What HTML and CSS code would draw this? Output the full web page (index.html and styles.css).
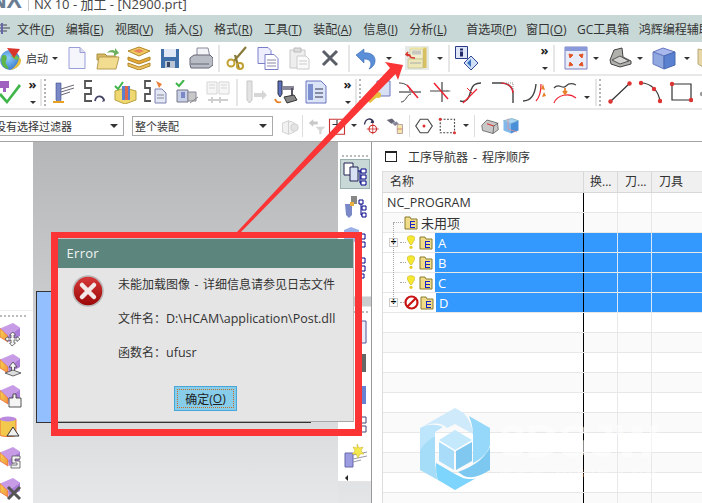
FILE: index.html
```html
<!DOCTYPE html>
<html lang="zh">
<head>
<meta charset="utf-8">
<title>NX 10 - 加工</title>
<link rel="stylesheet" href="styles.css">
</head>
<body>
<div class="app">
  <header class="titlebar">
    <span class="logo">NX</span>
    <span class="title-rule"></span>
    <span class="title-text">NX 10 - 加工 - [N2900.prt]</span>
  </header>
  <nav class="menubar">
    <svg class="menu-icon" width="12" height="12" viewBox="0 0 12 12"><path d="M0 2h7M0 5h10M0 8h7" stroke="#445" stroke-width="1.2"/><path d="M2 0v11" stroke="#66a" stroke-width="2"/></svg>
    <span class="menu-item m-first">文件(<u>F</u>)</span>
    <span class="menu-item">编辑(<u>E</u>)</span>
    <span class="menu-item">视图(<u>V</u>)</span>
    <span class="menu-item">插入(<u>S</u>)</span>
    <span class="menu-item">格式(<u>R</u>)</span>
    <span class="menu-item">工具(<u>T</u>)</span>
    <span class="menu-item">装配(<u>A</u>)</span>
    <span class="menu-item">信息(<u>I</u>)</span>
    <span class="menu-item">分析(<u>L</u>)</span>
    <span class="menu-item m-wide">首选项(<u>P</u>)</span>
    <span class="menu-item m-tight">窗口(<u>O</u>)</span>
    <span class="menu-item m-tighter">GC工具箱</span>
    <span class="menu-item m-tight">鸿辉编程辅助</span>
  </nav>

  <div class="toolbar tb1">
    <svg class="mn2" width="24" height="24" viewBox="0 0 24 24"><defs><radialGradient id="gl" cx=".4" cy=".4" r=".7"><stop offset="0" stop-color="#8fd0f8"/><stop offset="1" stop-color="#2f6fc8"/></radialGradient></defs><circle cx="12" cy="14" r="10" fill="url(#gl)"/><path d="M4 10c4-3 6 2 4 5s4 6 2 8c-5-1-8-6-6-13z" fill="#5fb545"/><path d="M13 10c3-2 7-1 8 2-1 3-5 2-8-2z" fill="#6cc050"/><path d="M9 2l13 1-6 9z" fill="#d8362c"/><path d="M23 13c1 5-4 10-11 11 4-2 8-6 9-12z" fill="#e8c040"/></svg>
    <span class="tool-label m4">启动</span><i class="caret m2"></i>
    <svg class="m7" width="24" height="24" viewBox="0 0 24 24"><path d="M4 1.500h11l5 5v16H4z" fill="#f4f6fc" stroke="#9a9ed8"/><path d="M15 1.500v5h5" fill="#dde" stroke="#9a9ed8"/></svg>
    <svg class="m7" width="24" height="24" viewBox="0 0 24 24"><path d="M1 8h8l2 2h9v4H1z" fill="#d8b860" stroke="#a89040"/><path d="M3 11h20l-3 12H1z" fill="#f2dc90" stroke="#b89c50"/><path d="M11 7c2-3 6-4 8-2V2l4 5-5 3V7c-2-1-5-1-7 0z" fill="#6cb060"/></svg>
    <svg class="m7" width="24" height="24" viewBox="0 0 24 24"><path d="M1 5l11-4 11 4-11 5z" fill="#f0c860" stroke="#b08828"/><path d="M6 5l6-2 5 2-5 2z" fill="#e88060"/><path d="M1 11l11 4 11-4v3l-11 4-11-4z" fill="#e8a838" stroke="#b08828"/><path d="M1 17l11 4 11-4v3l-11 4-11-4z" fill="#eec060" stroke="#b08828"/></svg>
    <svg class="m7" width="24" height="24" viewBox="0 0 24 24"><path d="M3 3h18v19H3z" fill="#3f6fa8"/><path d="M6 3h12v8H6z" fill="#dfe8f4"/><path d="M7 15h10v7H7z" fill="#b8c4d4"/><path d="M9 16h3v5H9z" fill="#3a4a66"/></svg>
    <svg class="m7" width="24" height="24" viewBox="0 0 24 24"><path d="M8 2h11l2 9H8z" fill="#f2f4f8" stroke="#889"/><path d="M1 12l4-3h16l3 3v7l-4 3H2l-1-3z" fill="#b8bcc4" stroke="#667"/><path d="M2 18h18" stroke="#667"/></svg>
    <span class="sep m5"></span>
    <svg class="m5" width="24" height="24" viewBox="0 0 24 24"><path d="M21 1L9 15M14 23L10 9" stroke="#8a7a3a" stroke-width="2.200" fill="none"/><circle cx="6" cy="17" r="3.500" fill="none" stroke="#c0a030" stroke-width="2"/><circle cx="15" cy="20" r="3" fill="none" stroke="#c0a030" stroke-width="2"/></svg>
    <svg class="m7" width="24" height="24" viewBox="0 0 24 24"><path d="M2 1.500h10l3 3v13H2z" fill="#eef" stroke="#7a7ec8"/><path d="M9 8.500h9l4 4v11H9z" fill="#fff" stroke="#7a7ec8"/><path d="M11 14h9M11 17h9M11 20h9" stroke="#88a"/></svg>
    <svg class="m7" width="24" height="24" viewBox="0 0 24 24"><path d="M3 4h15v18H3z" fill="#eee" stroke="#c8c8c8"/><path d="M7 2h7v4H7z" fill="#ddd" stroke="#bbb"/><path d="M10 10h9l3 3v10H10z" fill="#fafafa" stroke="#ccc"/><path d="M12 15h8M12 18h8" stroke="#ccc"/></svg>
    <svg class="m7" width="24" height="24" viewBox="0 0 24 24"><path d="M5 5l14 14M19 5L5 19" stroke="#5a5f68" stroke-width="3"/></svg>
    <span class="sep m6"></span>
    <svg class="m4" width="24" height="24" viewBox="0 0 24 24"><path d="M2 9l8-6v4c7-1 12 3 11 9-.5 3-3 6-6 7 3-4 3-10-5-10v4z" fill="#5a8ed8" stroke="#3a6cb0" stroke-width=".6"/></svg>
    <i class="caret m8"></i>
    <svg class="m13" width="24" height="24" viewBox="0 0 24 24"><path d="M0 0h24v24H0z" fill="#e6eae6"/><path d="M5 3h13v10H5z" fill="#f0eecf" stroke="#c8c48c" stroke-width=".6"/><path d="M18 1.500h3.500V22H18z" fill="#d8c060"/><path d="M5 1.500h16.500L18 3H5z" fill="#ece49c"/><path d="M7 4.500h9v4H7z" fill="#c8c8c0"/><path d="M3 13h15v9H3z" fill="#ece8b8" stroke="#b8b480" stroke-width=".6"/><path d="M5 17h11" stroke="#aaa"/><path d="M3 6L1 8.500 3.500 10M2 8.500c3 0 3 1 3 1.500 0 2 3 2 5 2" fill="none" stroke="#d8342c" stroke-width="1.600"/></svg>
    <i class="caret m8"></i>
    <span class="sep m5"></span>
    <svg class="m5" width="24" height="24" viewBox="0 0 24 24"><path d="M.5.500h12v12H.5z" fill="#dfe6f6" stroke="#2a3a8a"/><path d="M5 2.500h3v2H5zM5 5.500h3v5H5z" fill="#222a6a"/><path d="M16 10l7 7-7 7-7-7z" fill="#cfe0f4" stroke="#334a9a"/><path d="M16 13v8l-4-4z" fill="#3a70c0"/></svg>
    <span class="more m61"><b>»</b><i class="caret"></i></span>
    <span class="sep m4"></span>
    <svg class="m9" width="24" height="24" viewBox="0 0 24 24"><path d="M1 1h22v22H1z" fill="#e8ecf8" stroke="#7a80c0"/><path d="M1 1h22v4H1z" fill="#8a9ad8"/><path d="M5 8l4 1-3 3zM19 8l-4 1 3 3zM5 20l4-1-3-3zM19 20l-4-1 3-3z" fill="#e0552a" stroke="#e0552a"/></svg>
    <i class="caret m5"></i>
    <svg class="m9" width="24" height="24" viewBox="0 0 24 24"><path d="M2 14L6 4l8-2 1 9 8 4v3l-11 3-9-3z" fill="#b0b0ac" stroke="#444"/><path d="M4 14l8-4 9 5-9 3z" fill="#d4d4d0" stroke="#555"/></svg>
    <i class="caret m5"></i>
    <svg class="m9" width="24" height="24" viewBox="0 0 24 24"><path d="M1 6l10-4 12 4-11 4z" fill="#a8b8ec" stroke="#6878c0"/><path d="M1 6l11 4v13L1 18z" fill="#90a8e0" stroke="#6878c0"/><path d="M12 10l11-4v13l-11 4z" fill="#5a80d0" stroke="#4868b0"/></svg>
    <i class="caret m8"></i>
    <svg class="m7" width="24" height="24" viewBox="0 0 24 24"><path d="M1 3l10 2v19L1 18z" fill="#e8d8a8" stroke="#b8a878"/></svg>
  </div>

  <div class="toolbar tb2">
    <svg class="mn2" width="24" height="24" viewBox="0 0 24 24"><path d="M2 1h9v7H8v4H5V8H2z" fill="#a060c0"/><path d="M3 13l6 7L21 4l2 2L9 24l-8-9z" fill="#3fb54a"/></svg>
    <span class="more m6"><b>»</b><i class="caret"></i></span>
    <span class="sep m3"></span><span class="grip m2"></span>
    <svg class="m5" width="24" height="24" viewBox="0 0 24 24"><path d="M5 3h5v17l-2.500 3L5 20z" fill="#7a88c8" stroke="#3a4a88" stroke-width=".6"/><path d="M10 9l13-4M10 12l13-4M10 15l9-3" stroke="#667"/><path d="M2 22h11" stroke="#e8a020" stroke-width="2"/></svg>
    <svg class="m7" width="24" height="24" viewBox="0 0 24 24"><path d="M10 1H3v7h6v6H3v7h7" fill="none" stroke="#555" stroke-width="1.800"/><path d="M13 21c1-6 7-6 9-1" fill="none" stroke="#446" stroke-width="1.800"/><path d="M20 22l3-1-1-3z" fill="#446"/></svg>
    <svg class="m8" width="24" height="24" viewBox="0 0 24 24"><path d="M1 11l10-3 11 3v9l-11 4-10-4z" fill="#f0d870" stroke="#b8a040"/><path d="M8 6h8v14H8z" fill="#5a80d0"/><path d="M11 6h3v14h-3z" fill="#e06848"/><path d="M1 6l3 3 5-7" fill="none" stroke="#3fb54a" stroke-width="2"/></svg>
    <svg class="m6" width="24" height="24" viewBox="0 0 24 24"><path d="M7 1H1v7h5v6H1v7h6" fill="none" stroke="#555" stroke-width="1.800"/><path d="M11 9h7l4 4v10H11z" fill="#e4e8f4" stroke="#7a80b0"/><path d="M13 15h7M13 18h7" stroke="#889"/><path d="M12 1l6 3-3 4z" fill="#e8803a"/></svg>
    <svg class="m7" width="24" height="24" viewBox="0 0 24 24"><path d="M2 10h11v12H2z" fill="#c8d0e8" stroke="#778"/><path d="M6 12h4v6H6z" fill="#7a88c8"/><path d="M13 12h8v9h-8z" fill="#c8c8c8" stroke="#889"/><path d="M15 23l8-6" stroke="#888"/><path d="M1 3l3 3 5-6" fill="none" stroke="#3fb54a" stroke-width="2"/></svg>
    <svg class="m7 dim" width="24" height="24" viewBox="0 0 24 24"><path d="M1 2h10v12H1zM13 2h10v12H13z" fill="#f4f4f4" stroke="#ccc"/><path d="M3 5h6M3 8h6M15 5h6M15 8h6" stroke="#ccc"/><path d="M2 20h20M6 17v6M14 17v6" stroke="#c4c4c4" stroke-width="2"/></svg>
    <span class="sep m6"></span>
    <svg class="m6 dim" width="24" height="24" viewBox="0 0 24 24"><path d="M3 1h5v19l-2.500 3L3 20z" fill="#ddd" stroke="#bbb"/><path d="M10 13h8v-3l5 5-5 5v-3h-8z" fill="#ccc"/></svg>
    <svg class="m6" width="24" height="24" viewBox="0 0 24 24"><path d="M4 1h4v13l-2 3-2-3z" fill="#5a70c0" stroke="#334"/><path d="M8 6h12v4H8z" fill="#889"/><path d="M18 8v7" stroke="#556" stroke-width="2"/><path d="M10 17l10-2 3 5-10 3z" fill="#888" stroke="#333"/><path d="M1 19c1 3 3 4 6 3" fill="none" stroke="#e8802a" stroke-width="1.800"/></svg>
    <svg class="m6" width="24" height="24" viewBox="0 0 24 24"><path d="M2 1h15l5 5v17H2z" fill="#dbe4f6" stroke="#6a74c0"/><path d="M4 4h5v16H4z" fill="#7a90d0"/><path d="M11 9h8M11 13h8M11 17h8" stroke="#335"/></svg>
    <span class="more m15"><b>»</b><i class="caret"></i></span>
    <span class="sep m3"></span><span class="grip m2"></span>
    <svg class="m7" width="24" height="24" viewBox="0 0 24 24"><path d="M9 1h13v15H9z" fill="#d8e0f4" stroke="#6a74c0"/><path d="M1 22l8-7" stroke="#e8c040" stroke-width="3"/><circle cx="10" cy="15" r="3" fill="#e8c040"/></svg>
    <svg class="m6" width="24" height="24" viewBox="0 0 24 24"><path d="M1 12h22" stroke="#444" stroke-width="1.200"/><path d="M3 22c5 0 6-8 10-8M1 3c6 0 11 3 11 8" fill="none" stroke="#444"/><path d="M9 5l11 13" stroke="#e23" stroke-width="1.500"/></svg>
    <svg class="m7" width="24" height="24" viewBox="0 0 24 24"><path d="M1 11h19M13 2v20" stroke="#444" stroke-width="1.200"/><path d="M13 2v9M14 11h9" stroke="#888" stroke-dasharray="1.500 1.500"/><path d="M5 3l14 16" stroke="#e23" stroke-width="1.500"/></svg>
    <svg class="m6" width="24" height="24" viewBox="0 0 24 24"><path d="M1 21c7 2 9-3 11-11 1-4 4-7 10-7" fill="none" stroke="#444" stroke-width="1.400"/><path d="M4 23L18 9" stroke="#e23" stroke-width="1.200"/><path d="M8 8l6 6" stroke="#e23"/></svg>
    <svg class="m8" width="24" height="24" viewBox="0 0 24 24"><path d="M1 3h9c8 0 12 5 12 10v10" fill="none" stroke="#444" stroke-width="1.400"/><path d="M10 3c8 0 12 5 12 10" fill="none" stroke="#e23" stroke-width="1.200"/><path d="M15 3h7v6" fill="none" stroke="#888" stroke-dasharray="1 1"/></svg>
    <svg class="m7" width="24" height="24" viewBox="0 0 24 24"><path d="M1 21c8 0 12-7 13-17" fill="none" stroke="#444" stroke-width="1.400"/><path d="M14 21c4-4 5-10 5-17" fill="none" stroke="#e23" stroke-width="1.200"/><path d="M21 4l2 6-4-1zM22 12l-2 5 4-1z" fill="#e8802a"/></svg>
    <svg class="m7" width="24" height="24" viewBox="0 0 24 24"><path d="M1 8c5-6 8 2 12-2 3-3 6-3 10-1" fill="none" stroke="#444" stroke-width="1.200"/><path d="M1 23c3-8 15-11 22-5" fill="none" stroke="#e23" stroke-width="1.200"/><path d="M12 8v5M10 11l2 3 2-3" fill="none" stroke="#e8802a" stroke-width="1.800"/></svg>
    <i class="caret m7 low"></i>
    <span class="sep m5"></span><span class="grip m2"></span>
    <svg class="m7" width="24" height="24" viewBox="0 0 24 24"><path d="M2 22L22 3" stroke="#333" stroke-width="1.200"/><circle cx="2.500" cy="21.500" r="2.200" fill="#d33"/><circle cx="21.500" cy="3.500" r="2.200" fill="#d33"/></svg>
    <svg class="m6" width="24" height="24" viewBox="0 0 24 24"><path d="M3 3c10 0 18 8 19 19" fill="none" stroke="#333" stroke-width="1.200"/><circle cx="3" cy="3" r="2.200" fill="#d33"/><circle cx="16" cy="9" r="2.200" fill="#d33"/><circle cx="22" cy="21" r="2.200" fill="#d33"/></svg>
    <svg class="m7" width="24" height="24" viewBox="0 0 24 24"><path d="M3 4h19v16H3z" fill="none" stroke="#333" stroke-width="1.200"/><circle cx="3" cy="4" r="2.200" fill="#d33"/><circle cx="22" cy="20" r="2.200" fill="#d33"/></svg>
    <svg class="m6" width="24" height="24" viewBox="0 0 24 24"><circle cx="3" cy="14" r="2.200" fill="#999"/></svg>
  </div>

  <div class="toolbar tb3">
    <span class="combo combo-a">没有选择过滤器<i class="caret"></i></span>
    <span class="combo combo-b m8">整个装配<i class="caret"></i></span>
    <svg class="m8 dim" viewBox="0 0 24 24"><path d="M2 8l8-3 8 3v12l-8 3-8-3z" fill="#eee" stroke="#bbb"/><path d="M10 5v18" stroke="#bbb"/><circle cx="18" cy="14" r="5" fill="#ddd" stroke="#bbb"/></svg>
    <span class="sep m3 thin"></span>
    <svg class="m5 dim" viewBox="0 0 24 24"><path d="M1 8l6-5v3h6v4H7v3z" fill="#bbb"/><path d="M10 13h13l-5 5v5h-3v-5z" fill="#ccc"/></svg>
    <svg class="m2" viewBox="0 0 24 24"><path d="M2 3h20v20H2z" fill="#fff" stroke="#c33" stroke-width="1.500"/><path d="M12 4v12M6 10h12" stroke="#333" stroke-width="1.500"/></svg>
    <i class="caret m5"></i>
    <svg class="m6" viewBox="0 0 24 24"><path d="M2 10C3 2 11 0 14 7" fill="none" stroke="#335" stroke-width="1.800"/><path d="M12 3l3 5-5 0z" fill="#335"/><circle cx="13" cy="16" r="5" fill="none" stroke="#c22" stroke-width="1.500"/><path d="M13 8v15M5 16h16" stroke="#c22"/></svg>
    <svg class="m5" viewBox="0 0 24 24"><path d="M1 4l7-2 4 4-5 3z" fill="#667"/><path d="M8 8l6-2 3 3-5 3z" fill="#889"/><path d="M15 10h7v12h-7z" fill="#f4e8a8" stroke="#a89"/><path d="M15 16h7" stroke="#c66"/></svg>
    <span class="sep m5 thin"></span>
    <svg class="m5" viewBox="0 0 24 24"><path d="M7 3h10l6 9-6 9H7L1 12z" fill="#fff" stroke="#444" stroke-width="1.500"/><circle cx="12" cy="12" r="2" fill="#d33"/></svg>
    <svg class="m5" viewBox="0 0 24 24"><path d="M3 3h19v18H3z" fill="none" stroke="#444" stroke-width="1.500" stroke-dasharray="2.500 2"/><circle cx="3" cy="3" r="2" fill="#d33"/><circle cx="22" cy="21" r="2" fill="#d33"/></svg>
    <i class="caret m7"></i>
    <span class="sep m5 thin"></span>
    <svg class="m6" viewBox="0 0 24 24"><path d="M1 11L8 4l14 4 1 9-7 5-14-4z" fill="#c8c8c8" stroke="#555"/><path d="M8 9l9 3" stroke="#d33" stroke-width="1.500"/><path d="M16 22l1-10 6-4" fill="none" stroke="#555"/></svg>
    <svg class="m3" viewBox="0 0 24 24"><path d="M2 5l11-3 9 3-10 4z" fill="#a8d4f4" stroke="#7ab"/><path d="M2 5l10 4v13L2 18z" fill="#80b8ec"/><path d="M12 9l10-4v13l-10 4z" fill="#4a90d8"/><path d="M8 2v14l12 4" fill="none" stroke="#e88"/></svg>
  </div>

  <main class="workspace">
    <aside class="left-panel">
      <div class="left-dock">
        <span class="grip-h"></span>
        <svg width="24" height="24" viewBox="0 0 24 24"><use href="#boxshape"/><path d="M13 9l2.500 3H14v3h3v-1.500l3 2.500-3 2.500V17h-3v3h1.500L12 23l-2.500-3H11v-3H8v1.500L5 16l3-2.500V15h3v-3H9.500z" fill="#f4f4f4" stroke="#555" stroke-width=".8"/></svg>
        <svg width="24" height="24" viewBox="0 0 24 24"><use href="#boxshape"/><path d="M13 8l4 5h-2.500v5h-3v-5H9z" fill="#f4f4f4" stroke="#444" stroke-width=".8"/><path d="M5 19l8-3 8 3-8 3z" fill="#ddd" stroke="#444" stroke-width=".8"/></svg>
        <svg width="24" height="24" viewBox="0 0 24 24"><use href="#boxshape"/><path d="M9 22V13h4V9h3v4h5v9z" fill="#f4f4f4" stroke="#444" stroke-width=".9"/></svg>
        <svg width="24" height="24" viewBox="0 0 24 24"><path d="M0 3v16c0 2 16 2 16 0V3z" fill="#f2c94c" stroke="#e86030" stroke-width=".8"/><ellipse cx="8" cy="3" rx="8" ry="2.500" fill="#b98ae0"/><path d="M13 11l6 9H7z" fill="#f0f0f0" stroke="#333"/></svg>
        <svg width="24" height="24" viewBox="0 0 24 24"><use href="#boxshape"/><path d="M12 9h8v3h-5v2h5v7h-9v-3h6v-2h-5z" fill="#f4f4f4" stroke="#555" stroke-width=".8"/></svg>
        <svg width="24" height="24" viewBox="0 0 24 24"><use href="#boxshape"/><path d="M8 9l12 12M20 9L8 21" stroke="#555" stroke-width="3"/></svg>
      </div>
      <svg class="defs" width="0" height="0"><defs><linearGradient id="boxg" x1="0" y1="0" x2="1" y2="1"><stop offset="0" stop-color="#f6d850"/><stop offset="1" stop-color="#f09040"/></linearGradient><g id="boxshape"><path d="M0 5.500L13 0l7 4.500L8 13z" fill="#c79be6"/><path d="M0 5.500L8 13v6L0 14z" fill="url(#boxg)" stroke="#e8603a" stroke-width=".7"/><path d="M8 13l12-8.500V13L9 19z" fill="#ab7cd8"/></g></defs></svg>
    </aside>

    <section class="viewport"><div class="part"></div></section>

    <aside class="strip">
      <div class="strip-dock">
        <span class="grip-h"></span>
        <span class="strip-btn active"><svg width="24" height="24" viewBox="0 0 24 24"><path d="M1 1h9v12H1z" fill="#fff" stroke="#225"/><path d="M7 5h8v14H7z" fill="#d8e0f4" stroke="#225"/><path d="M18 7h5v4h-5zM18 13h5v4h-5zM18 19h5v4h-5z" fill="#fff" stroke="#008"/><path d="M15 9h3M17 9v12h1" fill="none" stroke="#008"/></svg></span>
        <svg width="24" height="24" viewBox="0 0 24 24"><path d="M8 1h6v8H8z" fill="#888"/><path d="M2 9h7v11l-3 3-3-3z" fill="#7a88c8"/><path d="M7 7h4v4H7z" fill="#e8b040"/><path d="M16 5h4v4h-4zM19 11h4v4h-4zM19 18h4v4h-4z" fill="#fff" stroke="#008"/><path d="M18 9v11h1" fill="none" stroke="#008"/></svg>
        <svg width="24" height="24" viewBox="0 0 24 24"><path d="M1 5l7-3 8 3v10l-7 3-8-3z" fill="#9cb0e8"/><path d="M17 9h5v5h-5zM17 17h5v5h-5z" fill="#fff" stroke="#008"/></svg>
        <svg width="24" height="24" viewBox="0 0 24 24"><path d="M17 3h5v5h-5zM17 11h5v5h-5zM17 19h4v4h-4z" fill="#fff" stroke="#008"/></svg>
      </div>
      <div class="strip-dock lower">
        <span class="grip-h"></span>
        <svg width="24" height="24" viewBox="0 0 24 24"><path d="M16 1h7v22h-7z" fill="#e8ecf8" stroke="#559"/></svg>
        <svg width="24" height="24" viewBox="0 0 24 24"><path d="M16 3h7v18h-7z" fill="#666"/></svg>
        <svg width="24" height="24" viewBox="0 0 24 24"><path d="M14 4h9v18h-9z" fill="#6880d0"/></svg>
        <svg width="24" height="24" viewBox="0 0 24 24"><path d="M16 4h7v6h-7zM16 13h7v6h-7z" fill="#fff" stroke="#447"/></svg>
        <svg width="24" height="24" viewBox="0 0 24 24"><path d="M2 9h8v14H2z" fill="#9c9ce0" stroke="#66a"/><path d="M10 11l14-3M10 15l14-3M10 18l8-2" stroke="#99a"/><path d="M14 0l2 4 4-1-2 4 3 3-4 0-2 4-2-4-4 0 3-3-2-4 4 1z" fill="#f4e850" stroke="#c8b020" stroke-width=".5"/></svg>
        <i class="left-arrow"></i>
      </div>
    </aside>

    <section class="nav-panel">
      <h2 class="nav-title"><span class="win-icon"></span>工序导航器 - 程序顺序</h2>
      <div class="grid">
        <div class="grid-head">
          <span class="cell c-name">名称</span>
          <span class="cell c-a">换...</span>
          <span class="cell c-b">刀...</span>
          <span class="cell c-c">刀具</span>
        </div>
        <div class="row"><span class="cell c-name">NC_PROGRAM</span><span class="cell c-a"></span><span class="cell c-b"></span><span class="cell c-c"></span></div>
        <div class="row alt"><span class="cell c-name"><span class="tree-dash d-long"></span><svg class="folder" width="14" height="14" viewBox="0 0 14 14"><path d="M1 1h5l1 2h6v10H1z" fill="#f0dc88" stroke="#8a7a30"/><path d="M6 5h5v1H7v2h4v1H7v2h4v1H6z" fill="#1a22c8"/></svg><span class="label big">未用项</span></span><span class="cell c-a"></span><span class="cell c-b"></span><span class="cell c-c"></span></div>
        <div class="row sel"><span class="cell c-name"><i class="plus">+</i><span class="tree-dash"></span><svg class="bulb" width="8" height="15" viewBox="0 0 10 17"><path d="M5 0c3 0 5 1.500 5 3 0 2-3 6-4 8H4C3 9 0 5 0 3c0-1.500 2-3 5-3z" fill="#f4e830" stroke="#b8a010" stroke-width=".6"/><circle cx="5" cy="14.500" r="2" fill="#e8cc20"/></svg><svg class="folder" width="14" height="14" viewBox="0 0 14 14"><path d="M1 1h5l1 2h6v10H1z" fill="#f0dc88" stroke="#8a7a30"/><path d="M6 5h5v1H7v2h4v1H7v2h4v1H6z" fill="#1a22c8"/></svg><span class="label">A</span></span><span class="cell c-a"></span><span class="cell c-b"></span><span class="cell c-c"></span></div>
        <div class="row sel"><span class="cell c-name"><span class="plus-gap"></span><span class="tree-dash"></span><svg class="bulb" width="8" height="15" viewBox="0 0 10 17"><path d="M5 0c3 0 5 1.500 5 3 0 2-3 6-4 8H4C3 9 0 5 0 3c0-1.500 2-3 5-3z" fill="#f4e830" stroke="#b8a010" stroke-width=".6"/><circle cx="5" cy="14.500" r="2" fill="#e8cc20"/></svg><svg class="folder" width="14" height="14" viewBox="0 0 14 14"><path d="M1 1h5l1 2h6v10H1z" fill="#f0dc88" stroke="#8a7a30"/><path d="M6 5h5v1H7v2h4v1H7v2h4v1H6z" fill="#1a22c8"/></svg><span class="label">B</span></span><span class="cell c-a"></span><span class="cell c-b"></span><span class="cell c-c"></span></div>
        <div class="row sel"><span class="cell c-name"><span class="plus-gap"></span><span class="tree-dash"></span><svg class="bulb" width="8" height="15" viewBox="0 0 10 17"><path d="M5 0c3 0 5 1.500 5 3 0 2-3 6-4 8H4C3 9 0 5 0 3c0-1.500 2-3 5-3z" fill="#f4e830" stroke="#b8a010" stroke-width=".6"/><circle cx="5" cy="14.500" r="2" fill="#e8cc20"/></svg><svg class="folder" width="14" height="14" viewBox="0 0 14 14"><path d="M1 1h5l1 2h6v10H1z" fill="#f0dc88" stroke="#8a7a30"/><path d="M6 5h5v1H7v2h4v1H7v2h4v1H6z" fill="#1a22c8"/></svg><span class="label">C</span></span><span class="cell c-a"></span><span class="cell c-b"></span><span class="cell c-c"></span></div>
        <div class="row sel"><span class="cell c-name"><i class="plus">+</i><span class="tree-dash short"></span><svg class="stop" width="15" height="15" viewBox="0 0 15 15"><circle cx="7.500" cy="7.500" r="6" fill="#fff" stroke="#c81414" stroke-width="2.200"/><path d="M3.500 11.500l8-8" stroke="#c81414" stroke-width="2.200"/></svg><svg class="folder" width="14" height="14" viewBox="0 0 14 14"><path d="M1 1h5l1 2h6v10H1z" fill="#f0dc88" stroke="#8a7a30"/><path d="M6 5h5v1H7v2h4v1H7v2h4v1H6z" fill="#1a22c8"/></svg><span class="label">D</span></span><span class="cell c-a"></span><span class="cell c-b"></span><span class="cell c-c"></span></div>
        <div class="row"><span class="cell c-name"></span><span class="cell c-a"></span><span class="cell c-b"></span><span class="cell c-c"></span></div>
        <div class="row alt"><span class="cell c-name"></span><span class="cell c-a"></span><span class="cell c-b"></span><span class="cell c-c"></span></div>
        <div class="row"><span class="cell c-name"></span><span class="cell c-a"></span><span class="cell c-b"></span><span class="cell c-c"></span></div>
        <div class="row alt"><span class="cell c-name"></span><span class="cell c-a"></span><span class="cell c-b"></span><span class="cell c-c"></span></div>
        <div class="row"><span class="cell c-name"></span><span class="cell c-a"></span><span class="cell c-b"></span><span class="cell c-c"></span></div>
        <div class="row alt"><span class="cell c-name"></span><span class="cell c-a"></span><span class="cell c-b"></span><span class="cell c-c"></span></div>
        <div class="row"><span class="cell c-name"></span><span class="cell c-a"></span><span class="cell c-b"></span><span class="cell c-c"></span></div>
        <div class="row alt"><span class="cell c-name"></span><span class="cell c-a"></span><span class="cell c-b"></span><span class="cell c-c"></span></div>
        <div class="row"><span class="cell c-name"></span><span class="cell c-a"></span><span class="cell c-b"></span><span class="cell c-c"></span></div>
        <div class="row alt"><span class="cell c-name"></span><span class="cell c-a"></span><span class="cell c-b"></span><span class="cell c-c"></span></div>
        <span class="tree-line"></span>
      </div>
    </section>
  </main>

  <!-- screenshot annotations lying over the window -->
  <svg class="arrow" width="702" height="503" viewBox="0 0 702 503"><path d="M403 65L385 62 390 68 237 232H241L395.500 74 398 80z" fill="#fb3535"/></svg>
  <div class="red-frame"></div>
  <section class="dialog">
    <div class="dialog-title">Error</div>
    <div class="dialog-body">
      <svg class="err" width="32" height="32" viewBox="0 0 32 32"><defs><linearGradient id="eg" x1="0" y1="0" x2="0" y2="1"><stop offset="0" stop-color="#d83a3a"/><stop offset="1" stop-color="#9a0606"/></linearGradient></defs><circle cx="16" cy="16" r="15" fill="url(#eg)" stroke="#b8b8b8" stroke-width="1.500"/><path d="M10 10l12 12M22 10L10 22" stroke="#f2e8e8" stroke-width="4.500" stroke-linecap="round"/></svg>
      <div class="msgs">
        <p class="msg-lead">未能加载图像 - 详细信息请参见日志文件</p>
        <p>文件名：<span class="lat">D:\HCAM\application\Post.dll</span></p>
        <p>函数名：<span class="lat">ufusr</span></p>
      </div>
    </div>
    <div class="dialog-foot"><button class="ok"><span>确定(<u>O</u>)</span></button></div>
  </section>
  <svg class="mark" width="90" height="95" viewBox="0 0 90 95">
    <path d="M10 28L45 8l8 4.500C62 22 64 32 63 43v-9L45 24l-8 4C32 22 20 22 10 28z" fill="#cfeafa"/>
    <path d="M59 16l21 12v17c-2 8-9 14-17 18V34c0-7-2-13-4-18z" fill="#95d8fa"/>
    <path d="M80 47c-4 9-14 19-32 25l6 4c8 3 16 0 26-6z" fill="#7cc8f0"/>
    <path d="M26 63l19 11 8 4c7 2 13 1 15-1L45 90 28 80c-2-5-2-12-2-17z" fill="#7dd4fc"/>
    <path d="M10 70V50c3-6 10-12 15-14v26c1 8 1 13 3 18z" fill="#a5dcf8"/>
    <path d="M10 28c8-4 16-4 23-1l-8 5v4c-7 4-12 9-15 14z" fill="#bde5fb"/>
    <path d="M45 30l17 10-17 10-16-10z" fill="#c4e8fc"/>
    <path d="M29 42l15 9v19l-15-9z" fill="#a8dcf8"/>
    <path d="M46 51l16-9v19l-16 9z" fill="#80c8f0"/>
  </svg>
  <div class="mark-text"><span>3DSJW</span><small>WWW.3DSJW.COM</small></div>
</div>
</body>
</html>
```

FILE: styles.css
```css
* { box-sizing: border-box; }
html, body { margin: 0; padding: 0; }
body { font-family: "Open Sans", "Noto Sans CJK SC", sans-serif; font-size: 12px; color: #333; background: #fff; }
.app { position: relative; width: 702px; height: 503px; overflow: hidden; display: flex; flex-direction: column; background: #fff; }

.titlebar { height: 15px; flex: none; display: flex; align-items: flex-start; overflow: hidden; background: #fff; }
.logo { width: 28px; height: 9px; flex: none; overflow: hidden; font: bold 23px/1px "Liberation Sans", sans-serif; text-indent: -10px; color: #6a7d92; white-space: nowrap; }
.title-rule { width: 1px; height: 11px; background: #ccc; flex: none; }
.title-text { margin-left: 5px; margin-top: -5px; font-size: 13px; line-height: 19px; color: #444; white-space: nowrap; }

.menubar { height: 27px; flex: none; display: flex; align-items: center; gap: 11.500px; background: #c8d8d6; white-space: nowrap; overflow: hidden; color: #333; font-size: 12px; }
.menu-icon { flex: none; }
.menu-item { flex: none; }
.menu-item.m-first { margin-left: -6.500px; }
.menu-item.m-wide { margin-left: 8px; }
.menu-item.m-tight { margin-left: -2px; }
.menu-item.m-tighter { margin-left: -1px; }

.toolbar { flex: none; display: flex; align-items: center; background: #fff; white-space: nowrap; overflow: hidden; }
.toolbar > svg { flex: none; }
.tb1 { height: 34px; border-bottom: 2px solid #e8e8e8; }
.tb2 { height: 34px; border-bottom: 2px solid #e8e8e8; }
.tb3 { height: 31px; }
.tb3 > svg { width: 18px; height: 18px; }
.tool-label { font-size: 11px; width: 24px; flex: none; }

.m2 { margin-left: 2px; } .m3 { margin-left: 3px; } .m4 { margin-left: 4px; } .m5 { margin-left: 5px; }
.m6 { margin-left: 6px; } .m7 { margin-left: 7px; } .m8 { margin-left: 8px; } .m9 { margin-left: 9px; }
.m13 { margin-left: 13px; } .m15 { margin-left: 15px; } .m61 { margin-left: 61px; } .mn2 { margin-left: -2px; }

.caret { display: inline-block; flex: none; width: 0; height: 0; border-left: 3px solid transparent; border-right: 3px solid transparent; border-top: 3px solid #333; }
.caret.low { margin-top: 10px; }
.sep { flex: none; width: 2px; height: 27px; background: #e6e6e6; }
.sep.thin { width: 1px; height: 22px; background: #ddd; }
.grip { flex: none; width: 2px; height: 27px; border-left: 2px dotted #b4b4b4; }
.dim { opacity: .8; }
.more { flex: none; width: 9px; height: 27px; display: flex; flex-direction: column; justify-content: space-between; align-items: center; padding: 0 0 2px; color: #222; line-height: 10px; font-size: 13px; }
.more b { font-weight: 700; line-height: 11px; }

.combo { flex: none; position: relative; height: 20px; display: flex; align-items: center; border: 1px solid #aaa; background: #fff; font-size: 11px; color: #333; }
.combo .caret { position: absolute; right: 5px; top: 7px; border-left-width: 4px; border-right-width: 4px; border-top-width: 4px; }
.combo-a { width: 134px; margin-left: -10px; padding-left: 4px; }
.combo-b { width: 141px; padding-left: 2px; }

.workspace { flex: 1; min-height: 0; display: flex; border-top: 1px solid #a4a4a4; }
.left-panel { width: 33px; flex: none; display: flex; flex-direction: column; justify-content: flex-end; background: #fff; }
.left-dock { height: 193px; padding-top: 4px; border-top: 1px solid #eee; display: flex; flex-direction: column; gap: 7px; overflow: hidden; }
.left-dock svg { flex: none; overflow: visible; }
.left-dock .grip-h { margin-bottom: -1px; }
.defs { position: absolute; }
.grip-h { display: block; width: 26px; height: 2px; border-top: 2px dotted #bbb; flex: none; }

.viewport { width: 305px; flex: none; position: relative; background: linear-gradient(#b5b6b8, #e6e7e9); }
.part { position: absolute; left: 3px; top: 149px; width: 275px; height: 132px; background: #93bfff; border: 1px solid #333; }

.strip { width: 34px; flex: none; background: linear-gradient(#b8b9bb, #e4e5e7); border-right: 1px solid #999; display: flex; flex-direction: column; }
.strip-dock { background: #fff; height: 155px; padding-top: 13px; display: flex; flex-direction: column; gap: 6px; align-items: center; border-bottom: 1px solid #e4e4e4; }
.strip-dock > .grip-h { margin-bottom: -4px; }
.strip-dock.lower { height: 176px; padding-top: 4px; gap: 7px; margin-top: 9px; border-top: 1px solid #e8e8e8; }
.strip-dock.lower > .grip-h { margin-bottom: 0; }
.strip-dock svg { flex: none; }
.strip-btn { width: 30px; height: 30px; display: flex; align-items: center; justify-content: center; }
.strip-btn.active { background: #c8d8d6; border: 1px solid #9ab0ae; }
.left-arrow { display: block; width: 0; height: 0; align-self: flex-start; margin-left: 7px; border-top: 3px solid transparent; border-bottom: 3px solid transparent; border-right: 3px solid #222; }

.nav-panel { flex: 1; min-width: 0; background: #fff; display: flex; flex-direction: column; overflow: hidden; }
.nav-title { margin: 0; height: 29px; flex: none; display: flex; align-items: center; font-size: 12px; font-weight: 400; color: #333; padding-left: 13px; white-space: nowrap; word-spacing: 2px; }
.win-icon { width: 12px; height: 11px; border: 1px solid #222; border-top-width: 2px; margin-right: 11px; }
.grid { position: relative; margin-left: 10px; border-left: 1px solid #ddd; border-top: 1px solid #ddd; flex: 1; overflow: hidden; }
.grid-head { height: 21px; display: flex; background: #f0f0f0; border-bottom: 1px solid #d8d8d8; font-size: 12px; }
.grid-head .cell { padding-left: 7px; border-right: 1px solid #d8d8d8; line-height: 20px; }
.grid-head .c-a { padding-left: 6px; }
.grid-head .c-c { border-right: 0; }
.row { height: 20px; display: flex; border-bottom: 1px solid #e8e8e8; background: #fff; }
.row.alt { background: #fafafa; }
.cell { flex: none; display: flex; align-items: center; white-space: nowrap; overflow: hidden; }
.c-name { width: 201px; }
.c-a { width: 34px; }
.c-b { width: 34px; }
.c-c { flex: 1; min-width: 0; }
.row .c-name { border-right: 1px solid #000; padding-left: 4px; font-size: 12.500px; color: #333; }
.row .c-a, .row .c-b { border-right: 1px solid #e8e8e8; }
.row.sel .c-a, .row.sel .c-b, .row.sel .c-c { background: #3399ff; }
.row.sel .c-a, .row.sel .c-b { border-right-color: #d8e8f8; }
.row.sel .label { flex: 1; align-self: stretch; display: flex; align-items: center; background: #3399ff; color: #fff; padding-left: 3px; margin-left: 2px; font-size: 13px; }
.label.big { font-size: 13px; margin-left: 3px; color: #333; }
.plus { flex: none; width: 9px; height: 9px; border: 1px solid #ccc; background: #fff; color: #000; font: normal 700 10px/7px "Liberation Mono", monospace; text-align: center; margin-left: 2px; margin-right: 1px; }
.plus-gap { flex: none; width: 12px; }
.tree-dash { flex: none; width: 6px; margin-left: 1px; border-top: 1px dotted #aaa; }
.tree-dash.short { width: 4px; }
.tree-dash.d-long { width: 10px; margin-left: 6px; margin-right: 1px; }
.row .folder { flex: none; }
.row.sel .folder { margin-left: 4px; }
.bulb { flex: none; margin-left: 1px; }
.stop { flex: none; margin-right: -3px; }
.tree-line { position: absolute; left: 10px; top: 51px; height: 80px; border-left: 1px dotted #aaa; }

.arrow { position: absolute; left: 0; top: 0; pointer-events: none; }
.red-frame { position: absolute; left: 51px; top: 232px; width: 311px; height: 204px; border: 7px solid #fb3535; border-top-width: 6px; }
.dialog { position: absolute; left: 58px; top: 239px; width: 296px; height: 183px; background: #e5e5e5; border-right: 1px solid #bbb; border-bottom: 1px solid #a8a8a8; display: flex; flex-direction: column; }
.dialog-title { height: 29px; flex: none; background: #5b857d; color: #f2f2f2; font-size: 13px; line-height: 29px; padding-left: 8.500px; letter-spacing: .3px; }
.dialog-body { flex: 1; display: flex; padding: 7px 0 0 14px; }
.err { flex: none; }
.msgs { margin-left: 14px; }
.msgs p { margin: 0; height: 34px; line-height: 20px; font-size: 12px; color: #333; white-space: nowrap; }
.msgs .msg-lead { word-spacing: 1.500px; }
.lat { font-size: 12.500px; }
.dialog-foot { height: 35px; flex: none; display: flex; justify-content: center; }
.ok { width: 63px; height: 25px; padding: 2px; background: #87cce9; border: 1px solid #4ba6d8; font: inherit; font-size: 12px; color: #222; }
.ok span { display: flex; align-items: center; justify-content: center; width: 100%; height: 100%; border: 1px dotted #c86a28; }

.mark { position: absolute; left: 410px; top: 400px; }
.mark-text { position: absolute; left: 500px; top: 416px; width: 180px; color: #fff; opacity: .55; display: flex; flex-direction: column; gap: 2px; white-space: nowrap; }
.mark-text span { font: bold 46px/50px "Liberation Sans", sans-serif; }
.mark-text small { font: 12px/12px "Liberation Sans", sans-serif; letter-spacing: 4px; }
```
